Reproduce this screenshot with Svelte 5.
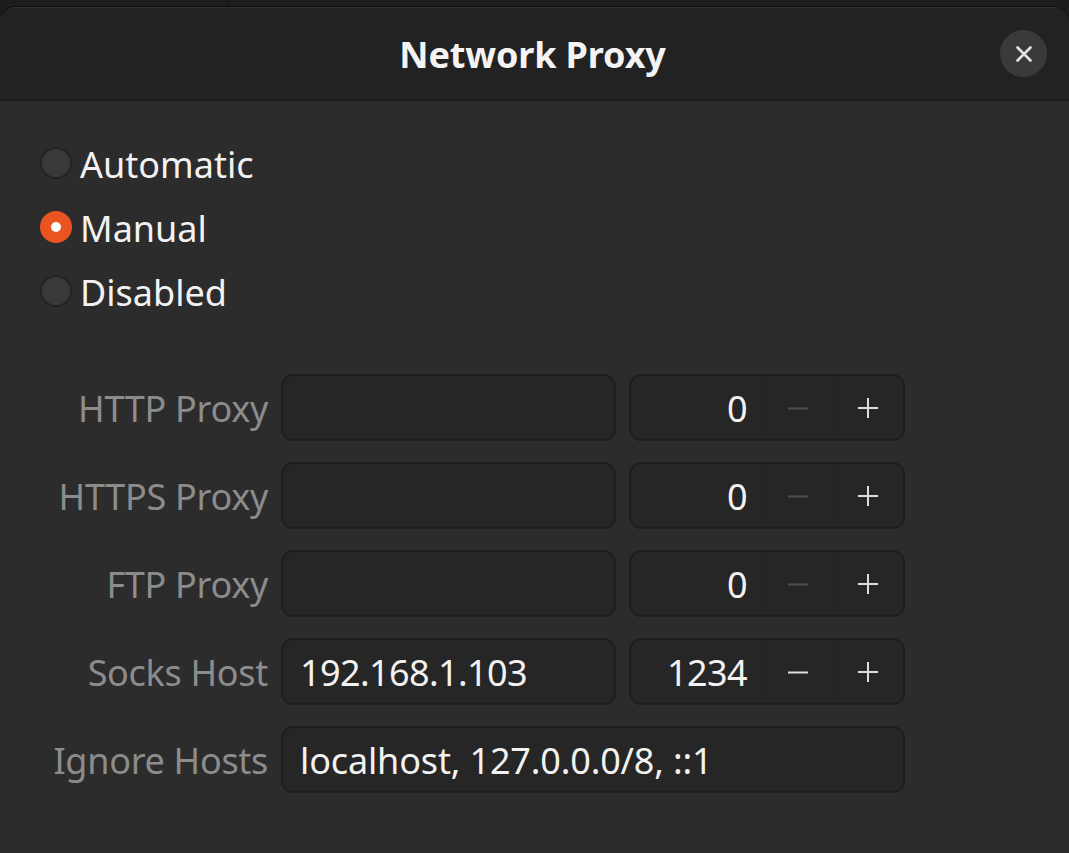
<script>
	const proxies = [
		{ label: 'HTTP Proxy', host: '', port: 0 },
		{ label: 'HTTPS Proxy', host: '', port: 0 },
		{ label: 'FTP Proxy', host: '', port: 0 },
		{ label: 'Socks Host', host: '192.168.1.103', port: 1234 }
	];
	const modes = ['Automatic', 'Manual', 'Disabled'];
	let mode = $state('Manual');
</script>

<div class="screen">
	<div class="behind"><span class="tick"></span></div>
	<div class="window">
		<header>
			<h1>Network Proxy</h1>
			<button class="close" aria-label="Close">
				<svg width="18" height="18" viewBox="0 0 18 18">
					<path d="M2.5 2.5 15.5 15.5M15.5 2.5 2.5 15.5" stroke="#e4e4e4" stroke-width="2.6" stroke-linecap="round" fill="none" />
				</svg>
			</button>
		</header>

		<div class="content">
			<div class="modes">
				{#each modes as m}
					<button class="mode" onclick={() => (mode = m)}>
						<span class="radio" class:on={mode === m}></span>
						<span class="name">{m}</span>
					</button>
				{/each}
			</div>

			<div class="grid">
				{#each proxies as p}
					<span class="label">{p.label}</span>
					<div class="field">{p.host}</div>
					<div class="spin">
						<span class="port">{p.port}</span>
						<span class="step" class:off={p.port === 0}>
							<svg width="22" height="22" viewBox="0 0 22 22"><path d="M1 11.5H21" stroke="currentColor" stroke-width="2" /></svg>
						</span>
						<span class="step">
							<svg width="22" height="22" viewBox="0 0 22 22"><path d="M1 11H21M11 1V21" stroke="currentColor" stroke-width="2" /></svg>
						</span>
					</div>
				{/each}
				<span class="label">Ignore Hosts</span>
				<div class="field wide">localhost, 127.0.0.0/8, ::1</div>
			</div>
		</div>
	</div>
</div>

<style>
	:global(body) {
		background: #1b1b1b;
	}

	.screen {
		width: 1069px;
		height: 853px;
		overflow: hidden;
		background: #1b1b1b;
		font-family: 'Noto Sans', 'Open Sans', sans-serif;
		display: flex;
		flex-direction: column;
	}

	.behind {
		height: 7px;
		padding-left: 227px;
		background: #1d1d1d;
		flex: none;
	}

	.tick {
		display: block;
		width: 1px;
		height: 6px;
		background: #111;
	}

	.window {
		flex: 1;
		background: #2c2c2c;
		border-radius: 16px 16px 0 0;
		box-shadow: 0 -1px 0 #0f0f0f;
		overflow: hidden;
	}

	header {
		height: 92px;
		box-sizing: content-box;
		padding-right: 4px;
		background: #222222;
		border-top: 1px solid #303030;
		border-bottom: 1px solid #1a1a1a;
		display: flex;
		align-items: center;
		justify-content: center;
		position: relative;
	}

	h1 {
		margin: 0;
		font-size: 36px;
		font-weight: 700;
		color: #f4f4f4;
		letter-spacing: -0.15px;
	}

	.close {
		position: absolute;
		right: 22px;
		top: 22px;
		width: 47px;
		height: 47px;
		border: none;
		border-radius: 50%;
		background: #3a3a3a;
		padding: 0;
		display: flex;
		align-items: center;
		justify-content: center;
	}

	.content {
		padding: 39px 0 0 40px;
	}

	.modes {
		display: flex;
		flex-direction: column;
		gap: 19px;
	}

	.mode {
		display: flex;
		align-items: center;
		gap: 8px;
		height: 45px;
		padding: 0;
		border: none;
		background: none;
		color: #f2f2f2;
		font: inherit;
		font-size: 36px;
	}

	.name {
		padding-top: 4px;
	}

	.radio {
		width: 32px;
		height: 32px;
		box-sizing: border-box;
		border-radius: 50%;
		background: #393939;
		border: 2px solid #232323;
		flex: none;
		position: relative;
	}

	.radio.on {
		background: #e95420;
		border-color: #e95420;
	}

	.radio.on::after {
		content: '';
		position: absolute;
		left: 50%;
		top: 50%;
		width: 10px;
		height: 10px;
		margin: -5px 0 0 -5px;
		border-radius: 50%;
		background: #fff;
	}

	.grid {
		margin: 61px 0 0 0;
		width: 865px;
		display: grid;
		grid-template-columns: 228px 335px 276px;
		column-gap: 13px;
		row-gap: 21px;
		grid-auto-rows: 67px;
		align-items: center;
		font-size: 36px;
		letter-spacing: -0.6px;
	}

	.label {
		justify-self: end;
		padding-top: 2px;
		color: #8c8c8c;
		letter-spacing: -0.3px;
		white-space: nowrap;
	}

	.field,
	.spin {
		height: 67px;
		box-sizing: border-box;
		background: #262626;
		border: 2px solid #1e1e1e;
		border-radius: 12px;
		color: #f2f2f2;
	}

	.field {
		display: flex;
		align-items: center;
		padding: 2px 0 0 17px;
		white-space: nowrap;
	}

	.field.wide {
		grid-column: 2 / 4;
		letter-spacing: -0.15px;
	}

	.spin {
		display: flex;
		align-items: stretch;
	}

	.port {
		flex: 1;
		display: flex;
		align-items: center;
		justify-content: flex-end;
		padding: 2px 15px 0 0;
	}

	.step {
		width: 69.5px;
		box-sizing: content-box;
		border-left: 1px solid #222;
		display: flex;
		align-items: center;
		justify-content: center;
		color: #dcdcdc;
	}

	.step.off {
		color: #505050;
	}
</style>
